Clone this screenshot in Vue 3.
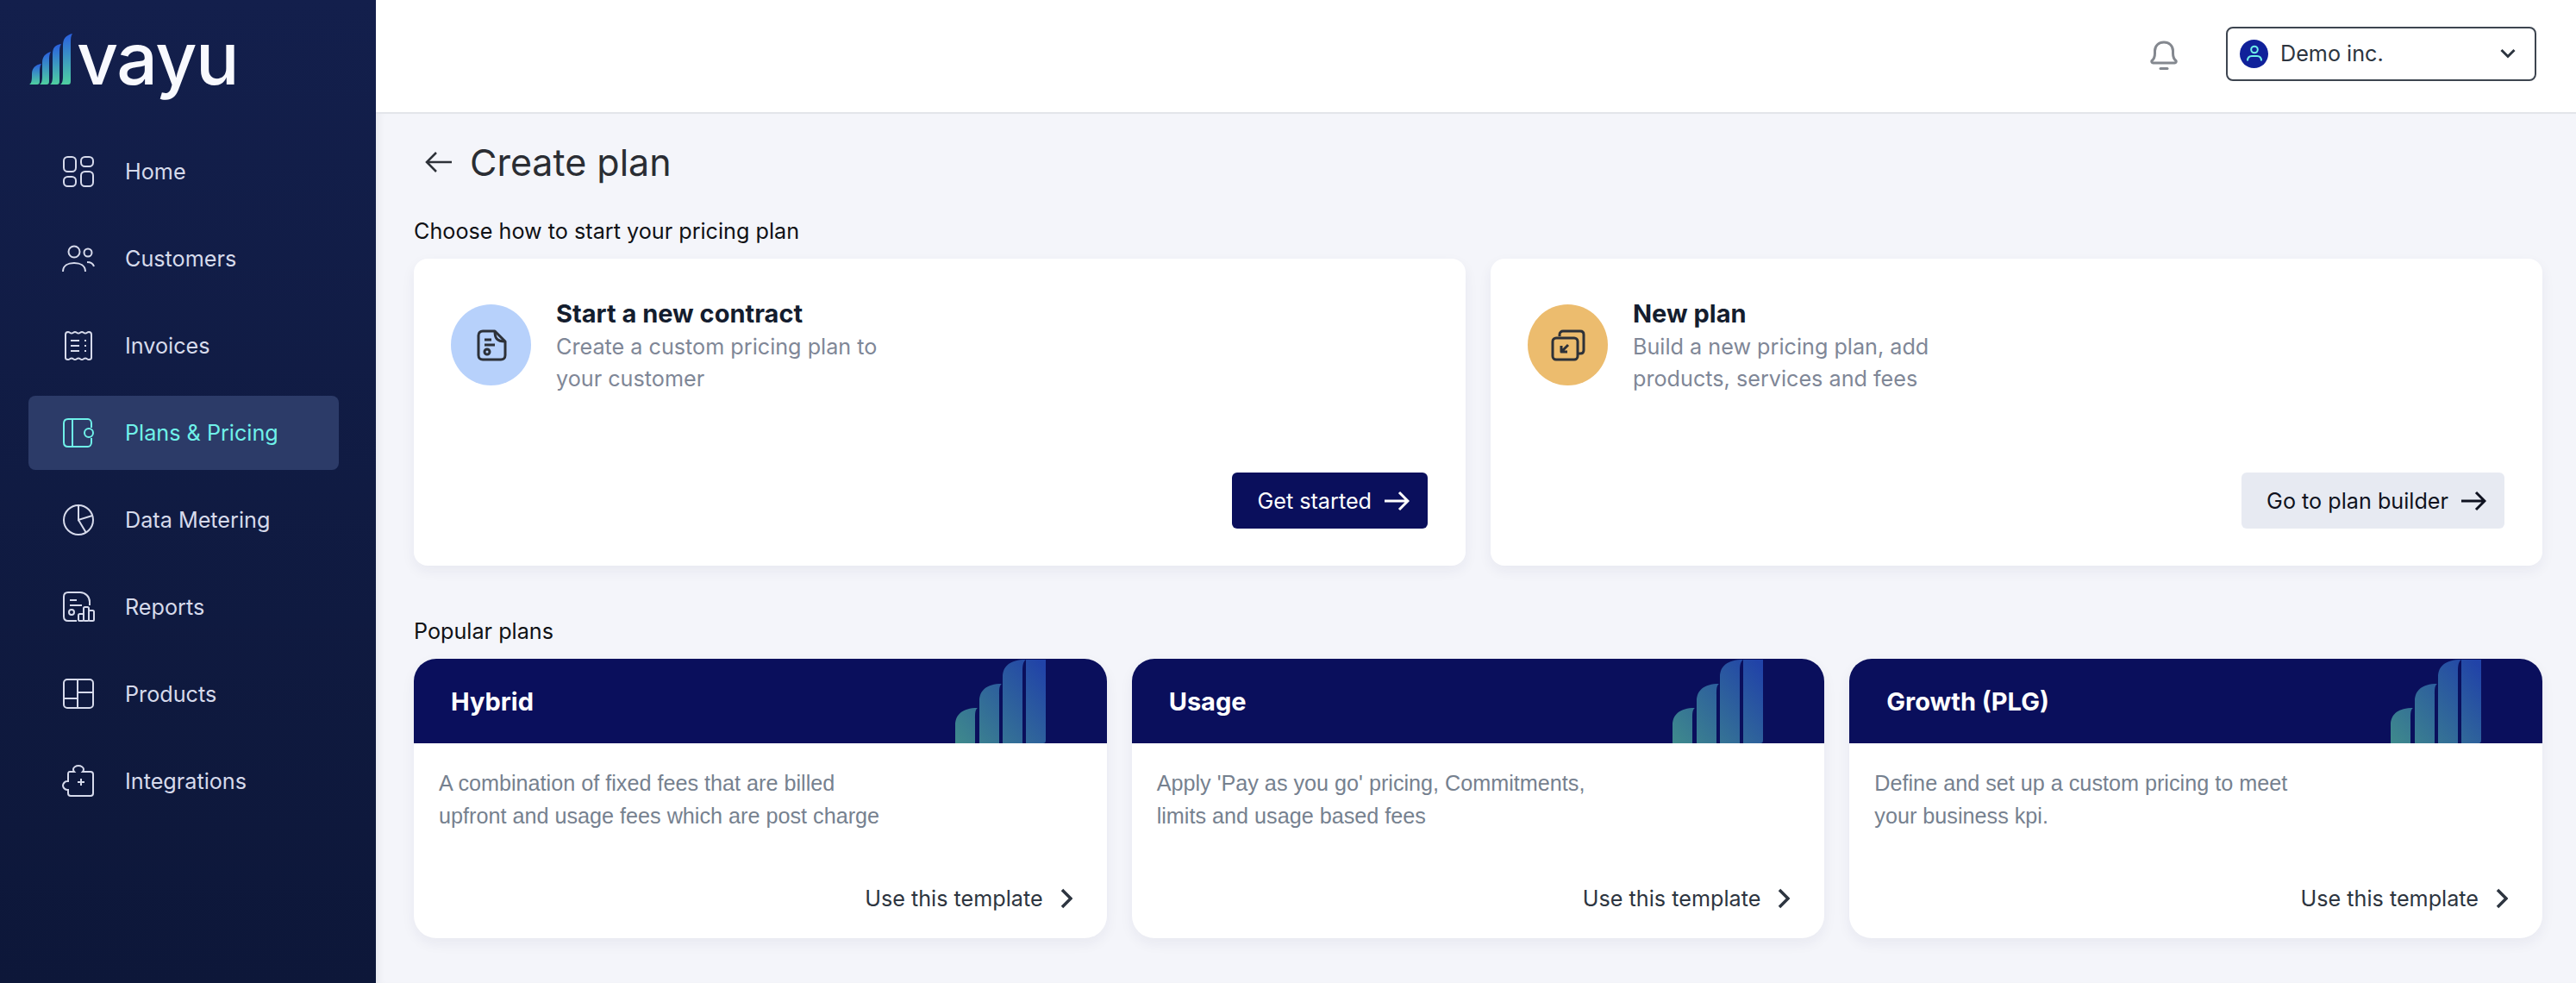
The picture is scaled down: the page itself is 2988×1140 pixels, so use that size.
<template>
  <div class="app">
    <aside class="sidebar">
      <div class="brand">
        <svg class="brand-mark" width="50" height="60" viewBox="0 0 50 60">
          <defs>
            <linearGradient id="markFill" x1="0" y1="0" x2="0" y2="1">
              <stop offset="0" stop-color="#2a5fe0" />
              <stop offset="1" stop-color="#4fd0a0" />
            </linearGradient>
          </defs>
          <path fill="url(#markFill)" d="M0 59c3-2 3-6 3-12 0-7 4-11 11-12-2 3-2 6-2 12v8c0 3-1 4-3 4z" />
          <path fill="url(#markFill)" d="M12 59c3-2 3-6 3-12V34c0-8 4-11 10-13-2 3-2 6-2 11v23c0 3-1 4-3 4z" />
          <path fill="url(#markFill)" d="M24 59c3-2 3-6 3-12V24c0-8 3-11 10-12-2 3-2 6-2 11v32c0 3-1 4-3 4z" />
          <path fill="url(#markFill)" d="M36 59c3-2 3-6 3-12V14C39 6 42 2 50 0c-2 3-2 6-2 11v44c0 3-1 4-3 4z" />
        </svg>
        <span class="brand-name">vayu</span>
      </div>
      <nav class="nav">
        <a v-for="item in navItems" :key="item.label" class="nav-item" :class="{ active: item.active }">
          <svg class="nav-icon" viewBox="0 0 36 36" v-html="item.icon"></svg>
          <span>{{ item.label }}</span>
        </a>
      </nav>
    </aside>

    <div class="main">
      <header class="topbar">
        <svg class="bell" width="32" height="34" viewBox="0 0 32 34">
          <path d="M2 23.5c2.500-2 3.500-4 3.500-8.500V12C5.500 6 10 2 16 2s10.500 4 10.500 10v3c0 4.500 1 6.500 3.500 8.500.5 1 0 2.500-1.500 2.500h-25C2 26 1.500 24.500 2 23.500z" />
          <path d="M12 32.500h8" />
        </svg>
        <div class="account">
          <span class="avatar">
            <svg width="20" height="20" viewBox="0 0 20 20">
              <circle cx="10" cy="5.500" r="3.800" />
              <path d="M2 18.500c0-4 2-5.500 5-5.500h6c3 0 5 1.500 5 5.500" />
            </svg>
          </span>
          <span class="account-name">Demo inc.</span>
          <svg class="chevron-down" width="18" height="12" viewBox="0 0 18 12">
            <path d="M1.500 2 9 9.500 16.500 2" />
          </svg>
        </div>
      </header>

      <main class="content">
        <div class="title-row">
          <svg width="32" height="26" viewBox="0 0 32 26">
            <path d="M31 13H3M13 2 2 13l11 11" />
          </svg>
          <h1>Create plan</h1>
        </div>

        <p class="section-label first">Choose how to start your pricing plan</p>
        <section class="start-cards">
          <article class="start-card">
            <div class="start-head">
              <span class="circle blue">
                <svg width="36" height="37" viewBox="0 0 36 37">
                  <path d="M8 2h14l12 12v16c0 3-2 5-5 5H8c-3 0-5-2-5-5V7c0-3 2-5 5-5z" />
                  <path d="M22 2c0 8 2 12 12 12M10 12h8M10 18h12" />
                  <circle cx="13" cy="26" r="3" />
                </svg>
              </span>
              <div>
                <h2>Start a new contract</h2>
                <p>Create a custom pricing plan to your customer</p>
              </div>
            </div>
            <button class="btn primary">
              Get started
              <svg width="30" height="24" viewBox="0 0 30 24"><path d="M1 12h27M18 2l10 10-10 10" /></svg>
            </button>
          </article>

          <article class="start-card">
            <div class="start-head">
              <span class="circle amber">
                <svg width="40" height="37" viewBox="0 0 40 37">
                  <path d="M10 8V6c0-2.500 2-4 4-4h20c2.500 0 4 1.500 4 4v18c0 2.500-1.500 4-4 4h-3" />
                  <rect x="2" y="10" width="29" height="25" rx="4" />
                  <path d="M20 18l-8 8M12 19v7h7" />
                </svg>
              </span>
              <div>
                <h2>New plan</h2>
                <p>Build a new pricing plan, add products, services and fees</p>
              </div>
            </div>
            <button class="btn secondary">
              Go to plan builder
              <svg width="30" height="24" viewBox="0 0 30 24"><path d="M1 12h27M18 2l10 10-10 10" /></svg>
            </button>
          </article>
        </section>

        <p class="section-label second">Popular plans</p>
        <section class="templates">
          <article v-for="plan in plans" :key="plan.name" class="template">
            <div class="template-head">
              <h3>{{ plan.name }}</h3>
              <svg class="bars" width="105" height="97" viewBox="0 0 105 97">
                <defs>
                  <linearGradient :id="plan.id" gradientUnits="userSpaceOnUse" x1="0" y1="97" x2="105" y2="10">
                    <stop offset="0" stop-color="#3f8a8c" />
                    <stop offset="1" stop-color="#2143a8" />
                  </linearGradient>
                </defs>
                <path :fill="`url(#${plan.id})`" d="M0 97V76c0-12 8-20 26-20-3 2-3 6-3 14v27z" />
                <path :fill="`url(#${plan.id})`" d="M28 97V48c0-12 8-20 26-20-3 2-3 6-3 14v55z" />
                <path :fill="`url(#${plan.id})`" d="M55 97V20C55 8 63 0 82 0c-3 2-4 6-4 14v83z" />
                <path :fill="`url(#${plan.id})`" d="M82 0h23v93c0 3-1 4-3 4H82z" />
              </svg>
            </div>
            <div class="template-body">
              <p>{{ plan.text }}</p>
              <a class="use-link">
                Use this template
                <svg width="14" height="24" viewBox="0 0 14 24"><path d="M2 2l10 10L2 22" /></svg>
              </a>
            </div>
          </article>
        </section>
      </main>
    </div>
  </div>
</template>

<script setup>
const navItems = [
  {
    label: "Home",
    icon: '<rect x="1" y="1" width="14" height="17" rx="4.5"/><rect x="21" y="1" width="14" height="11" rx="4.5"/><rect x="1" y="24" width="14" height="11" rx="4.500"/><rect x="21" y="18" width="14" height="17" rx="4.5"/>',
  },
  {
    label: "Customers",
    icon: '<circle cx="13" cy="10" r="6.500"/><path d="M0 33c0-7 6-10 13-10s13 3 13 10"/><circle cx="29" cy="11" r="4.500"/><path d="M28 22c4 0 7 1.500 8 5"/>',
  },
  {
    label: "Invoices",
    icon: '<path d="M6 2c2 0 2 1.500 4 1.500S12 2 14 2s2 1.500 4 1.500S20 2 22 2s2 1.500 4 1.500S28 2 30 2c2 0 3 1 3 3v27c0 1-1 2-3 2s-2-1.500-4-1.500S24 34 22 34s-2-1.500-4-1.500-2 1.500-4 1.500-2-1.500-4-1.500S8 34 6 34c-2 0-3-1-3-2V5c0-2 1-3 3-3z"/><path d="M9 12h10M9 18h10M9 24h10M25 12h2M25 18h2M25 24h2"/>',
  },
  {
    label: "Plans & Pricing",
    active: true,
    icon: '<path d="M33 12V7c0-3-2-5-4-5H6C3 2 1 4 1 7v22c0 3 2 5 5 5h23c2 0 4-2 4-5v-5"/><path d="M11 2v32"/><circle cx="30" cy="18" r="5"/>',
  },
  {
    label: "Data Metering",
    icon: '<circle cx="18" cy="18" r="17"/><path d="M18 1v17l16-5M18 18l9 15"/>',
  },
  {
    label: "Reports",
    icon: '<path d="M16 34H6c-3 0-5-2-5-5V6c0-3 2-5 5-5h14c6 0 11 5 11 11v4"/><path d="M8 10h8M8 16h14"/><circle cx="10" cy="24" r="3"/><rect x="18" y="26" width="6" height="8" rx="1.500"/><rect x="24" y="18" width="6" height="16" rx="1.500"/><rect x="30" y="22" width="6" height="12" rx="1.500"/>',
  },
  {
    label: "Products",
    icon: '<rect x="1" y="1" width="34" height="33" rx="4"/><path d="M17 1v33M17 16h18M1 23h16"/>',
  },
  {
    label: "Integrations",
    icon: '<path d="M8 7h5c-1-1-1-2-1-3 0-2 3-4 6-4s6 2 6 4c0 1 0 2-1 3h9c2 0 3 1 3 3v22c0 2-1 3-3 3H9c-2 0-3-1-3-3v-4H5c-3 0-5-3-5-5s2-5 5-5h1v-8c0-2 0-3 2-3z"/><path d="M21 15v8M17 19h8"/>',
  },
];

const plans = [
  { id: "barsHybrid", name: "Hybrid", text: "A combination of fixed fees that are billed upfront and usage fees which are post charge" },
  { id: "barsUsage", name: "Usage", text: "Apply 'Pay as you go' pricing, Commitments, limits and usage based fees" },
  { id: "barsGrowth", name: "Growth (PLG)", text: "Define and set up a custom pricing to meet your business kpi." },
];
</script>

<style scoped>
.app {
  display: flex;
  width: 2988px;
  height: 1140px;
  overflow: hidden;
  font-family: Inter, "Liberation Sans", sans-serif;
  background: #f4f5fa;
}

.sidebar {
  width: 436px;
  flex-shrink: 0;
  background: linear-gradient(180deg, #131f4c 0%, #0d1739 100%);
}
.brand {
  display: flex;
  align-items: flex-start;
  height: 156px;
  padding: 39px 0 0 34px;
  box-sizing: border-box;
}
.brand-mark {
  flex-shrink: 0;
}
.brand-name {
  margin: -23px 0 0 5px;
  font-size: 84px;
  line-height: 104px;
  font-weight: 500;
  letter-spacing: -1.500px;
  color: #f8f9fe;
}
.nav {
  display: flex;
  flex-direction: column;
  gap: 15px;
  padding: 0 43px 0 33px;
}
.nav-item {
  display: flex;
  align-items: center;
  gap: 36px;
  height: 86px;
  padding-left: 40px;
  border-radius: 8px;
  font-size: 25.2px;
  color: #d6daeb;
}
.nav-item.active {
  background: #2c3b68;
  color: #6ff1e9;
}
.nav-icon {
  width: 36px;
  height: 36px;
  fill: none;
  stroke: currentColor;
  stroke-width: 2;
  overflow: visible;
}

.main {
  flex: 1;
  min-width: 0;
  display: flex;
  flex-direction: column;
}
.topbar {
  display: flex;
  align-items: center;
  justify-content: flex-end;
  gap: 56px;
  height: 132px;
  padding: 0 46px 6px 0;
  box-sizing: border-box;
  background: #fff;
  border-bottom: 2px solid #e3e5ea;
}
.bell {
  fill: none;
  stroke: #84888f;
  stroke-width: 3;
  stroke-linecap: round;
  margin-top: 4px;
}
.account {
  display: flex;
  align-items: center;
  width: 360px;
  height: 63px;
  padding: 0 22px 0 14px;
  box-sizing: border-box;
  border: 2px solid #3d4550;
  border-radius: 8px;
}
.avatar {
  display: flex;
  align-items: center;
  justify-content: center;
  width: 33px;
  height: 33px;
  border-radius: 50%;
  background: #10219a;
}
.avatar svg {
  fill: none;
  stroke: #6ff1e9;
  stroke-width: 2;
}
.account-name {
  flex: 1;
  margin-left: 14px;
  font-size: 25.2px;
  color: #2d3540;
}
.chevron-down {
  fill: none;
  stroke: #2d3540;
  stroke-width: 3;
}

.content {
  flex: 1;
  padding: 27px 39px 0 44px;
  box-shadow: inset 8px 0 10px -6px rgba(20, 30, 60, 0.07);
}
.title-row {
  display: flex;
  align-items: center;
  gap: 20px;
  height: 58px;
  padding-left: 13px;
}
.title-row svg {
  fill: none;
  stroke: #2d3138;
  stroke-width: 2.500;
}
h1 {
  margin: 0;
  font-size: 43px;
  line-height: 58px;
  font-weight: 400;
  color: #2a2d33;
}
.section-label {
  margin: 0 0 15px;
  font-size: 25.2px;
  line-height: 34px;
  color: #0f1115;
}
.section-label.first {
  margin-top: 34px;
}
.section-label.second {
  margin-top: 59px;
}

.start-cards {
  display: grid;
  grid-template-columns: 1fr 1fr;
  gap: 29px;
}
.start-card {
  display: flex;
  flex-direction: column;
  justify-content: space-between;
  height: 356px;
  padding: 45px 44px 43px 43px;
  box-sizing: border-box;
  background: #fff;
  border-radius: 16px;
  box-shadow: 0 6px 16px rgba(30, 40, 90, 0.06);
}
.start-head {
  display: flex;
  gap: 29px;
}
.circle {
  display: flex;
  align-items: center;
  justify-content: center;
  flex-shrink: 0;
  width: 93px;
  height: 94px;
  margin-top: 8px;
  border-radius: 50%;
}
.circle svg {
  fill: none;
  stroke: #2d3138;
  stroke-width: 3;
  stroke-linejoin: round;
}
.circle.blue {
  background: #b7d1fb;
}
.circle.amber {
  background: #ecbc6e;
}
h2 {
  margin: 0;
  font-size: 29px;
  line-height: 38px;
  font-weight: 700;
  color: #141d2e;
}
.start-head p {
  max-width: 390px;
  margin: 1px 0 0;
  font-size: 25.2px;
  line-height: 37px;
  color: #7f8797;
}
.btn {
  display: flex;
  align-items: center;
  gap: 14px;
  align-self: flex-end;
  height: 65px;
  padding: 0 21px 0 29px;
  border: 0;
  border-radius: 6px;
  font-family: inherit;
  font-size: 25.2px;
}
.btn svg {
  fill: none;
  stroke: currentColor;
  stroke-width: 3;
}
.btn.primary {
  background: #0a0f5c;
  color: #fff;
}
.btn.secondary {
  background: #e7eaf2;
  color: #0f1220;
}

.templates {
  display: grid;
  grid-template-columns: repeat(3, 1fr);
  gap: 29px;
}
.template {
  height: 324px;
  display: flex;
  flex-direction: column;
  background: #fff;
  border-radius: 26px;
  overflow: hidden;
  box-shadow: 0 6px 16px rgba(30, 40, 90, 0.06);
}
.template-head {
  display: flex;
  align-items: center;
  justify-content: space-between;
  height: 98px;
  padding: 0 71px 0 43px;
  background: #0a0f5c;
}
.bars {
  align-self: flex-end;
}
h3 {
  margin: 0;
  font-size: 29px;
  font-weight: 700;
  color: #fff;
}
.template-body {
  flex: 1;
  display: flex;
  flex-direction: column;
  justify-content: space-between;
  padding: 27px 40px 29px 29px;
}
.template-body p {
  max-width: 522px;
  margin: 0;
  font-family: "Liberation Sans", Arial, sans-serif;
  font-size: 25.2px;
  line-height: 38px;
  color: #76818f;
}
.use-link {
  display: flex;
  align-items: center;
  justify-content: flex-end;
  gap: 20px;
  font-size: 25.2px;
  line-height: 34px;
  color: #2d3540;
}
.use-link svg {
  fill: none;
  stroke: currentColor;
  stroke-width: 3.500;
}
</style>
